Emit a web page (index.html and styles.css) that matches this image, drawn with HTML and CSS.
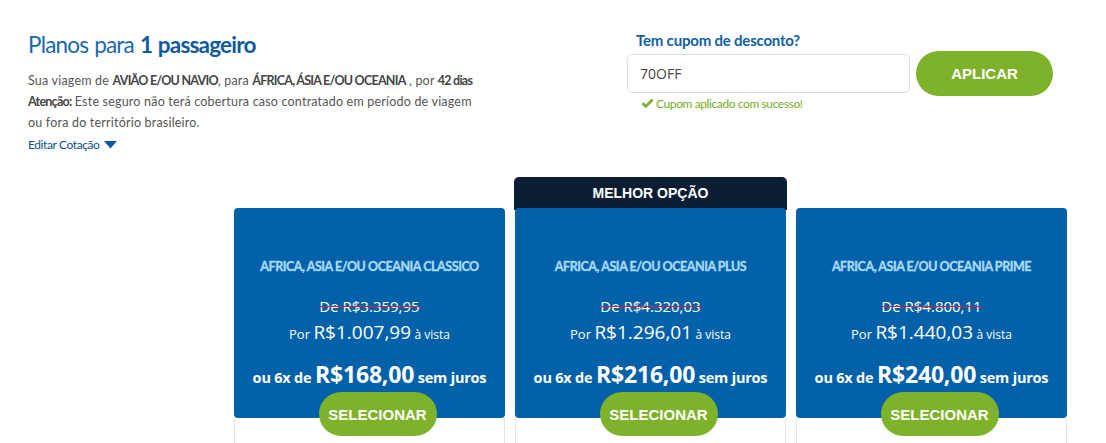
FILE: index.html
```html
<!DOCTYPE html>
<html lang="pt-BR">
<head>
<meta charset="utf-8">
<link rel="stylesheet" href="styles.css">
</head>
<body>
<div class="page">
  <div class="top">
    <div class="intro">
      <h1 class="title">Planos para <strong>1 passageiro</strong></h1>
      <p class="desc">Sua viagem de <b>AVIÃO E/OU NAVIO</b>, para <b>ÁFRICA, ÁSIA E/OU OCEANIA</b> , por <b>42 dias</b><br><b>Atenção:</b> Este seguro não terá cobertura caso contratado em período de viagem<br>ou fora do território brasileiro.</p>
      <a class="edit" href="#">Editar Cotação <svg class="caret" width="13" height="8" viewBox="0 0 13 8"><path d="M0 0h13L6.5 7.5z" fill="#0d5aa0"/></svg></a>
    </div>
    <div class="coupon">
      <div class="coupon-label">Tem cupom de desconto?</div>
      <div class="coupon-row">
        <div class="coupon-input">70OFF</div>
        <button class="btn-apply">APLICAR</button>
      </div>
      <div class="coupon-ok"><svg width="13" height="11" viewBox="0 0 13 11"><path d="M0.5 6.2 2.6 4.2 4.9 6.5 10.6 0.6 12.6 2.6 4.9 10.3z" fill="#7ab22b"/></svg>Cupom aplicado com sucesso!</div>
    </div>
  </div>

  <div class="plans">
    <div class="plan">
      <div class="badge-space"></div>
      <div class="card">
        <div class="plan-name">AFRICA, ASIA E/OU OCEANIA CLASSICO</div>
        <div class="old">De R$3.359,95</div>
        <div class="now">Por <span class="now-val">R$1.007,99</span> <span class="vista">à vista</span></div>
        <div class="inst">ou 6x de <span class="inst-val">R$168,00</span> sem juros</div>
        <button class="btn-select">SELECIONAR</button>
      </div>
      <div class="below"></div>
    </div>
    <div class="plan">
      <div class="badge">MELHOR OPÇÃO</div>
      <div class="card">
        <div class="plan-name">AFRICA, ASIA E/OU OCEANIA PLUS</div>
        <div class="old">De R$4.320,03</div>
        <div class="now">Por <span class="now-val">R$1.296,01</span> <span class="vista">à vista</span></div>
        <div class="inst">ou 6x de <span class="inst-val">R$216,00</span> sem juros</div>
        <button class="btn-select">SELECIONAR</button>
      </div>
      <div class="below"></div>
    </div>
    <div class="plan">
      <div class="badge-space"></div>
      <div class="card">
        <div class="plan-name">AFRICA, ASIA E/OU OCEANIA PRIME</div>
        <div class="old">De R$4.800,11</div>
        <div class="now">Por <span class="now-val">R$1.440,03</span> <span class="vista">à vista</span></div>
        <div class="inst">ou 6x de <span class="inst-val">R$240,00</span> sem juros</div>
        <button class="btn-select">SELECIONAR</button>
      </div>
      <div class="below"></div>
    </div>
  </div>
</div>
</body>
</html>
```

FILE: styles.css
```css
* { box-sizing: border-box; }
html, body { margin: 0; padding: 0; background: #fff; }
body { font-family: "Lato", "Noto Sans", sans-serif; color: #555; overflow: hidden; }

.page { padding: 30px 0 0 0; }

.top { display: flex; align-items: flex-start; }

.intro { margin-left: 28px; width: 470px; }
.title { margin: 0; font-size: 22.5px; line-height: 30px; font-weight: 400; color: #1767ad; letter-spacing: -0.8px; word-spacing: 1px; }
.title strong { font-weight: 700; color: #0f5a9e; }
.desc { margin: 10px 0 0 0; font-size: 12.5px; line-height: 21px; color: #555; letter-spacing: 0.2px; white-space: nowrap; }
.desc b { font-weight: 700; color: #444; letter-spacing: -0.75px; }
.edit { display: inline-flex; align-items: center; gap: 4px; margin-top: 3px; font-size: 12px; color: #0d4f8c; text-decoration: none; letter-spacing: -0.4px; }
.caret { margin-top: 1px; }

.coupon { margin-left: 129px; padding-top: 0; }
.coupon-label { margin-left: 9px; font-size: 15px; line-height: 20px; font-weight: 700; color: #0f5fa5; letter-spacing: -0.2px; }
.coupon-row { display: flex; align-items: center; gap: 6px; margin-top: 1px; }
.coupon-input { width: 283px; height: 39px; border: 1px solid #ddd; border-radius: 5px; padding: 0 12px; display: flex; align-items: center; font-family: "Open Sans", sans-serif; font-size: 14px; color: #444; }
.btn-apply { width: 137px; height: 45px; border: 0; border-radius: 23px; background: #7db22a; color: #fff; font-family: "Liberation Sans", Arial, sans-serif; font-weight: 700; font-size: 15px; }
.coupon-ok { display: flex; align-items: center; gap: 2px; margin: 0 0 0 14px; font-size: 12px; color: #74ae25; letter-spacing: -0.4px; }

.plans { display: flex; gap: 10px; margin: 25px 0 0 234px; }
.plan { width: 271px; display: flex; flex-direction: column; }
.badge-space { height: 31px; }
.badge { height: 33px; margin: 0 -1px -2px; background: #0b1e33; border-radius: 5px 5px 0 0; color: #fff; font-family: "Liberation Sans", Arial, sans-serif; font-weight: 700; font-size: 14px; display: flex; align-items: center; justify-content: center; padding-bottom: 2px; }
.card { height: 210px; background: #0361aa; border-radius: 4px; display: flex; flex-direction: column; align-items: center; color: #fff; padding-top: 51px; position: relative; }
.plan-name { font-size: 12.5px; font-weight: 700; color: #a9daf6; line-height: 16px; letter-spacing: -0.45px; -webkit-text-stroke: 0.35px #a9daf6; }
.old { margin-top: 21px; font-family: "Open Sans", sans-serif; font-size: 15px; line-height: 20px; text-decoration: line-through; text-decoration-color: #d2232a; color: #fff; }
.now { margin-top: 4px; font-family: "Open Sans", sans-serif; font-size: 13px; line-height: 24px; }
.now-val { font-size: 19px; }
.vista { font-size: 12px; }
.inst { margin-top: 13px; font-family: "Open Sans", sans-serif; font-weight: 700; font-size: 14.5px; line-height: 28px; letter-spacing: -0.2px; }
.inst-val { font-size: 23px; }
.btn-select { margin: 0 0 0 16px; width: 118px; height: 44px; border: 0; border-radius: 22px; background: #7db22a; color: #fff; font-family: "Liberation Sans", Arial, sans-serif; font-weight: 700; font-size: 15px; flex-shrink: 0; }
.below { height: 30px; border-left: 1px solid #e3e3e3; border-right: 1px solid #e3e3e3; }
```
